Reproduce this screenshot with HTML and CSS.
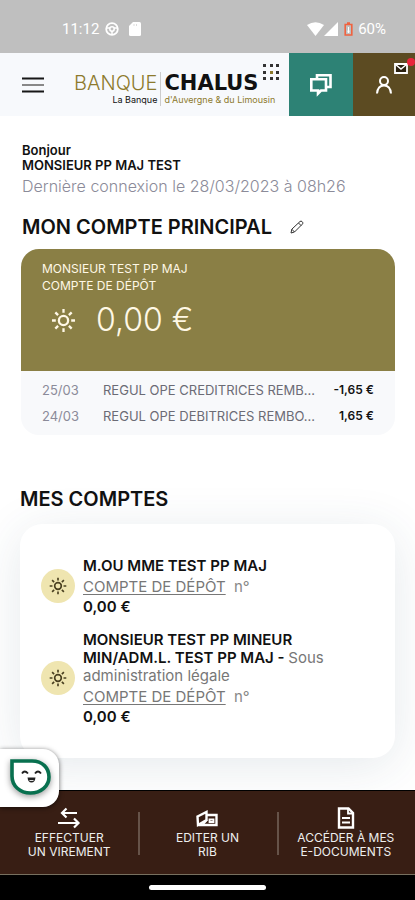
FILE: index.html
```html
<!DOCTYPE html>
<html lang="fr">
  <head>
    <meta charset="UTF-8" />
    <meta name="viewport" content="width=device-width, initial-scale=1.0" />
    <title>Banque Chalus</title>
    <link rel="stylesheet" href="styles.css">
  </head>
  <body>
    <svg class="symbols" aria-hidden="true">
      <symbol id="sun" viewBox="0 0 26 26">
        <circle cx="13" cy="13" r="4.8" />
        <path d="M13 1v4M13 21v4M1 13h4M21 13h4M4.5 4.5l2.9 2.9M18.6 18.6l2.9 2.9M4.5 21.5l2.9-2.9M18.6 7.4l2.9-2.9" />
      </symbol>
    </svg>

    <div class="status-bar">
      <div class="status-group">
        <span>11:12</span>
        <svg class="status-icon-left" width="14" height="14" viewBox="0 0 14 14">
          <circle cx="7" cy="7" r="5.8" fill="none" stroke="#fff" stroke-width="1.8" />
          <circle cx="7" cy="7" r="2.2" fill="none" stroke="#fff" stroke-width="1.5" />
          <path d="M1 6h4M9 6h4M7 9v4" stroke="#fff" stroke-width="1.5" />
        </svg>
        <svg class="status-icon-left" width="12" height="14" viewBox="0 0 12 14">
          <path d="M4 0h6.5Q12 0 12 1.5v11Q12 14 10.500 14h-9Q0 14 0 12.500V4z" fill="#fff" />
          <path d="M5 2v2M7.500 2v2" stroke="#ddd" />
        </svg>
      </div>
      <div class="status-group status-right">
        <svg width="17" height="14" viewBox="0 0 17 14">
          <path d="M0 3Q8.500-2.500 17 3L8.500 14z" fill="#fff" />
        </svg>
        <svg width="14" height="14" viewBox="0 0 14 14">
          <path d="M14 0v14H0z" fill="#fff" />
        </svg>
        <svg class="battery" width="9" height="14" viewBox="0 0 9 14">
          <path d="M3 1h3M1.200 2.500h6.600v10.500H1.200z" fill="none" stroke="#f0623f" stroke-width="1.600" />
          <path d="M4.500 5v4M4 8.500h1v2H4z" stroke="#fff" fill="#fff" />
        </svg>
        <span>60%</span>
      </div>
    </div>

    <header class="header">
      <button class="menu-button" type="button" aria-label="Menu">
        <svg width="22" height="16" viewBox="0 0 22 16">
          <path d="M0 1.500h22M0 14.500h22" stroke="#171717" stroke-width="2" />
          <path d="M0 8h22" stroke="#888" stroke-width="2" />
        </svg>
      </button>
      <a class="logo" href="#" aria-label="Banque Chalus">
        <span class="logo-banque">BANQUE</span>
        <span class="logo-chalus">CHALUS</span>
        <span class="logo-tag-left">La Banque</span>
        <span class="logo-tag-right">d'Auvergne &amp; du Limousin</span>
        <svg class="logo-dots" width="17" height="17" viewBox="0 0 17 17">
          <path d="M0 0h3v3H0zM7 0h3v3H7zM13 0h3v3h-3zM0 7h3v3H0zM13 7h3v3h-3zM0 13h3v3H0zM7 13h3v3H7zM13 13h3v3h-3z" fill="#333" />
          <path d="M7 7h3v3H7z" fill="#8d7a2c" />
        </svg>
      </a>
      <button class="messages-button" type="button" aria-label="Messagerie">
        <svg width="24" height="24" viewBox="0 0 24 24" fill="none" stroke="#fff" stroke-width="2.600">
          <path d="M8 5V2.300H21.500V14H18" />
          <path d="M2.300 6.300H17V17.500H12L9 20.500V17.500H2.300z" />
        </svg>
      </button>
      <button class="profile-button" type="button" aria-label="Mon profil">
        <svg width="18" height="20" viewBox="0 0 18 20" fill="none" stroke="#fff" stroke-width="2">
          <circle cx="9" cy="6" r="4" />
          <path d="M2 18.500C2.500 13 5 10.500 9 10.500S15.500 13 16 18.500" />
        </svg>
        <svg class="mail-badge" width="22" height="18" viewBox="0 0 22 18">
          <path d="M2 6h12v9H2z" fill="#2b2110" stroke="#fff" stroke-width="1.800" />
          <path d="M2.500 6.500L8 11l5.500-4.500" fill="none" stroke="#fff" stroke-width="1.500" />
          <circle cx="18" cy="4" r="4" fill="#e9243c" />
        </svg>
      </button>
    </header>

    <main class="content">
      <section class="welcome">
        <p class="hello">Bonjour</p>
        <p class="user-name">MONSIEUR PP MAJ TEST</p>
        <p class="last-login">Dernière connexion le 28/03/2023 à 08h26</p>
      </section>

      <section class="main-account">
        <div class="title-row">
          <h2>MON COMPTE PRINCIPAL</h2>
          <button class="edit-button" type="button" aria-label="Modifier">
            <svg width="14" height="14" viewBox="0 0 14 14" fill="none" stroke="#333">
              <path d="M1 13l.8-3.800L10 1.500q1-.8 2 0l.6.7q.7 1-.2 1.900L4.500 12zM8.500 3l2.700 2.700M1.800 9.200L4.500 12" />
            </svg>
          </button>
        </div>
        <div class="account-card">
          <div class="account-head">
            <p>MONSIEUR TEST PP MAJ</p>
            <p>COMPTE DE DÉPÔT</p>
            <div class="balance">
              <svg class="sun-large"><use href="#sun" /></svg>
              <span>0,00 €</span>
            </div>
          </div>
          <table class="operations">
            <tr>
              <td class="date">25/03</td>
              <td class="label">REGUL OPE CREDITRICES REMB...</td>
              <td class="amount">-1,65 €</td>
            </tr>
            <tr>
              <td class="date">24/03</td>
              <td class="label">REGUL OPE DEBITRICES REMBO...</td>
              <td class="amount">1,65 €</td>
            </tr>
          </table>
        </div>
      </section>

      <section class="accounts">
        <h2>MES COMPTES</h2>
        <div class="accounts-card">
          <div class="account">
            <span class="account-icon"><svg class="sun-small"><use href="#sun" /></svg></span>
            <div>
              <p class="account-name">M.OU MME TEST PP MAJ</p>
              <p class="account-type"><a href="#">COMPTE DE DÉPÔT</a> <span>n°</span></p>
              <p class="account-amount">0,00 €</p>
            </div>
          </div>
          <div class="account">
            <span class="account-icon"><svg class="sun-small"><use href="#sun" /></svg></span>
            <div>
              <p class="account-name">MONSIEUR TEST PP MINEUR<br />MIN/ADM.L. TEST PP MAJ - <span>Sous<br />administration légale</span></p>
              <p class="account-type"><a href="#">COMPTE DE DÉPÔT</a> <span>n°</span></p>
              <p class="account-amount">0,00 €</p>
            </div>
          </div>
        </div>
      </section>
    </main>

    <nav class="bottom-nav">
      <a href="#">
        <svg width="24" height="22" viewBox="0 0 24 22" fill="none" stroke="#fff" stroke-width="2.200">
          <path d="M20 6H5M9.500 1.500L5 6l4.500 4.500M1 16h20M17 11.500l4.500 4.500-4.500 4.500" />
        </svg>
        <span>EFFECTUER<br />UN VIREMENT</span>
      </a>
      <a href="#">
        <svg width="24" height="22" viewBox="0 0 24 22" fill="none" stroke="#fff" stroke-width="2.400">
          <path d="M2.500 9.500L11.500 5v8L3 18zM12 8h9.500v10H3" />
          <path d="M12 13l-4 4.500M14.500 12.500h4v2.500h-4z" stroke-width="1.800" />
        </svg>
        <span>EDITER UN<br />RIB</span>
      </a>
      <a href="#">
        <svg width="18" height="22" viewBox="0 0 18 22" fill="none" stroke="#fff" stroke-width="2.400">
          <path d="M2 1.500h9.500L16 6v14.500H2z" />
          <path d="M11 2v4.500h4.500M5 11h8M5 15.500h8" stroke-width="1.800" />
        </svg>
        <span>ACCÉDER À MES<br />E-DOCUMENTS</span>
      </a>
      <button class="chat-button" type="button" aria-label="Assistant">
        <svg width="42" height="38" viewBox="0 0 42 38">
          <path d="M2 2h20c10.500 0 17 7 17 16s-8 16-18.500 16S2 27 2 17z" fill="#fff" stroke="#08704f" stroke-width="3.600" />
          <path d="M12 14.500q2.500-4 6 0M25 14.500q3-4 6 0" fill="none" stroke="#222" stroke-width="1.800" />
          <path d="M17.500 18.500h8q-.5 5-4 5t-4-5z" fill="#222" />
          <path d="M19.500 21.500h4" stroke="#ddd" />
        </svg>
      </button>
    </nav>
    <div class="system-bar"><span class="home-pill"></span></div>
  </body>
</html>
```

FILE: styles.css
```css
* {
  box-sizing: border-box;
}
body {
  display: flex;
  flex-direction: column;
  min-height: 100vh;
  margin: 0;
  font-family: "Inter", sans-serif;
  background-color: #fff;
  color: #111;
}
h2,
p {
  margin: 0;
}
button {
  padding: 0;
  border: none;
  background: none;
  cursor: pointer;
}
svg {
  display: block;
}
.symbols {
  position: absolute;
  width: 0;
  height: 0;
}

/* Status bar */
.status-bar {
  display: flex;
  justify-content: space-between;
  height: 53px;
  padding: 4px 29px 0 62px;
  background-color: #bfbfbf;
  color: #fff;
  font-family: "Roboto", sans-serif;
  font-size: 15px;
}
.status-group {
  display: flex;
  align-items: center;
}
.status-icon-left {
  margin-left: 6px;
}
.status-icon-left + .status-icon-left {
  margin-left: 10px;
}
.battery {
  margin: 0 5px 0 6px;
}

/* Header */
.header {
  display: flex;
  align-items: stretch;
  height: 63px;
  background-color: #f7f9fc;
}
.menu-button {
  width: 66px;
  padding-left: 22px;
}
.logo {
  position: relative;
  display: grid;
  grid-template-columns: auto auto;
  grid-template-rows: 22px 12px;
  align-content: center;
  flex: 1;
  justify-content: start;
  padding: 8px 0 0 8px;
  color: #111;
  text-decoration: none;
  white-space: nowrap;
}
.logo-banque,
.logo-tag-left {
  padding-right: 3px;
  border-right: 1px solid #ccc;
  text-align: right;
}
.logo-banque {
  color: #8d7a2c;
  font-size: 20px;
  font-weight: 300;
  line-height: 22px;
}
.logo-chalus {
  padding-left: 3px;
  font-family: "DejaVu Sans", sans-serif;
  font-size: 21px;
  font-weight: bold;
  line-height: 22px;
}
.logo-tag-left,
.logo-tag-right {
  font-size: 9px;
  line-height: 12px;
}
.logo-tag-right {
  padding-left: 3px;
  color: #8d7a2c;
}
.logo-dots {
  position: absolute;
  top: 11px;
  right: 9px;
}
.messages-button,
.profile-button {
  display: flex;
  align-items: center;
  justify-content: center;
  width: 64px;
  background-color: #2d8275;
}
.profile-button {
  position: relative;
  width: 62px;
  background-color: #5c4b22;
}
.mail-badge {
  position: absolute;
  top: 5px;
  right: 0;
}

/* Content */
.content {
  flex: 1;
  padding: 27px 20px 32px;
  overflow: hidden;
}
.welcome {
  padding-left: 2px;
}
.hello,
.user-name {
  font-size: 13px;
  font-weight: 600;
  line-height: 15px;
}
.last-login {
  padding-top: 1px;
  color: #8b8b99;
  font-size: 16px;
  font-weight: 300;
  line-height: 24px;
}
h2 {
  font-size: 20px;
  font-weight: 600;
  line-height: 24px;
}
.title-row {
  display: flex;
  align-items: center;
  gap: 18px;
  padding: 17px 2px 10px;
}
.account-card {
  margin: 0 0 0 1px;
  border-radius: 18px;
  background-color: #f8f9fb;
  overflow: hidden;
}
.account-head {
  height: 122px;
  padding: 11px 21px;
  background-color: #8a7f45;
  color: #fff8e6;
  font-size: 12px;
  line-height: 17px;
}
.balance {
  display: flex;
  align-items: center;
  gap: 20px;
  padding: 8px 0 0 9px;
  font-size: 32px;
  font-weight: 300;
  line-height: 36px;
}
.sun-large {
  width: 25px;
  height: 25px;
  fill: none;
  stroke: #fff8e6;
  stroke-width: 2.4;
}
.operations {
  width: 100%;
  margin: 6px 0;
  padding: 0 21px;
  border-spacing: 0;
  color: #6b6b75;
  font-size: 13px;
  line-height: 26px;
  white-space: nowrap;
}
.operations td {
  padding: 0;
}
.operations .date {
  width: 61px;
  color: #8b8b99;
}
.operations .amount {
  color: #111;
  font-size: 12px;
  font-weight: 600;
  text-align: right;
}

/* Accounts list */
.accounts {
  padding-top: 52px;
}
.accounts-card {
  display: flex;
  flex-direction: column;
  gap: 16px;
  margin-top: 13px;
  padding: 33px 21px;
  border-radius: 22px;
  background-color: #fff;
  box-shadow: 0 8px 50px rgba(40, 70, 100, 0.12);
}
.account {
  display: flex;
  align-items: center;
  gap: 8px;
}
.account-icon {
  display: flex;
  flex: none;
  align-items: center;
  justify-content: center;
  width: 34px;
  height: 34px;
  border-radius: 50%;
  background-color: #efe5b0;
}
.sun-small {
  width: 18px;
  height: 18px;
  fill: none;
  stroke: #4a4020;
  stroke-width: 2.4;
}
.account-name {
  font-size: 15px;
  font-weight: 600;
  line-height: 18px;
}
.account-name span {
  color: #777;
  font-weight: 400;
}
.account-type {
  color: #888;
  font-size: 15px;
  line-height: 24px;
}
.account-type a {
  margin-right: 4px;
  color: #777;
  text-underline-offset: 2px;
}
.account-amount {
  font-size: 15px;
  font-weight: 600;
  line-height: 16px;
}

/* Bottom navigation */
.bottom-nav {
  position: relative;
  display: grid;
  grid-template-columns: repeat(3, 1fr);
  height: 85px;
  border-top: 1px solid #000;
  border-bottom: 1px solid #77705f;
  background-color: #381e14;
}
.bottom-nav a {
  display: flex;
  flex-direction: column;
  align-items: center;
  gap: 2px;
  padding-top: 16px;
  color: #eee;
  font-size: 12px;
  line-height: 14px;
  text-align: center;
  text-decoration: none;
}
.bottom-nav a + a {
  background: linear-gradient(#665349, #665349) no-repeat left 21px / 2px 43px;
}
.chat-button {
  position: absolute;
  top: -42px;
  left: 0;
  width: 59px;
  height: 58px;
  padding-left: 10px;
  border-radius: 0 16px 16px 0;
  background-color: #fff;
  box-shadow: 0 1px 5px rgba(0, 0, 0, 0.6);
}
.chat-button svg {
  filter: drop-shadow(0 2px 3px rgba(0, 0, 0, 0.4));
}
.system-bar {
  display: flex;
  align-items: center;
  justify-content: center;
  height: 25px;
  background-color: #000;
}
.home-pill {
  width: 28%;
  height: 5px;
  border-radius: 3px;
  background-color: #fff;
}
```
